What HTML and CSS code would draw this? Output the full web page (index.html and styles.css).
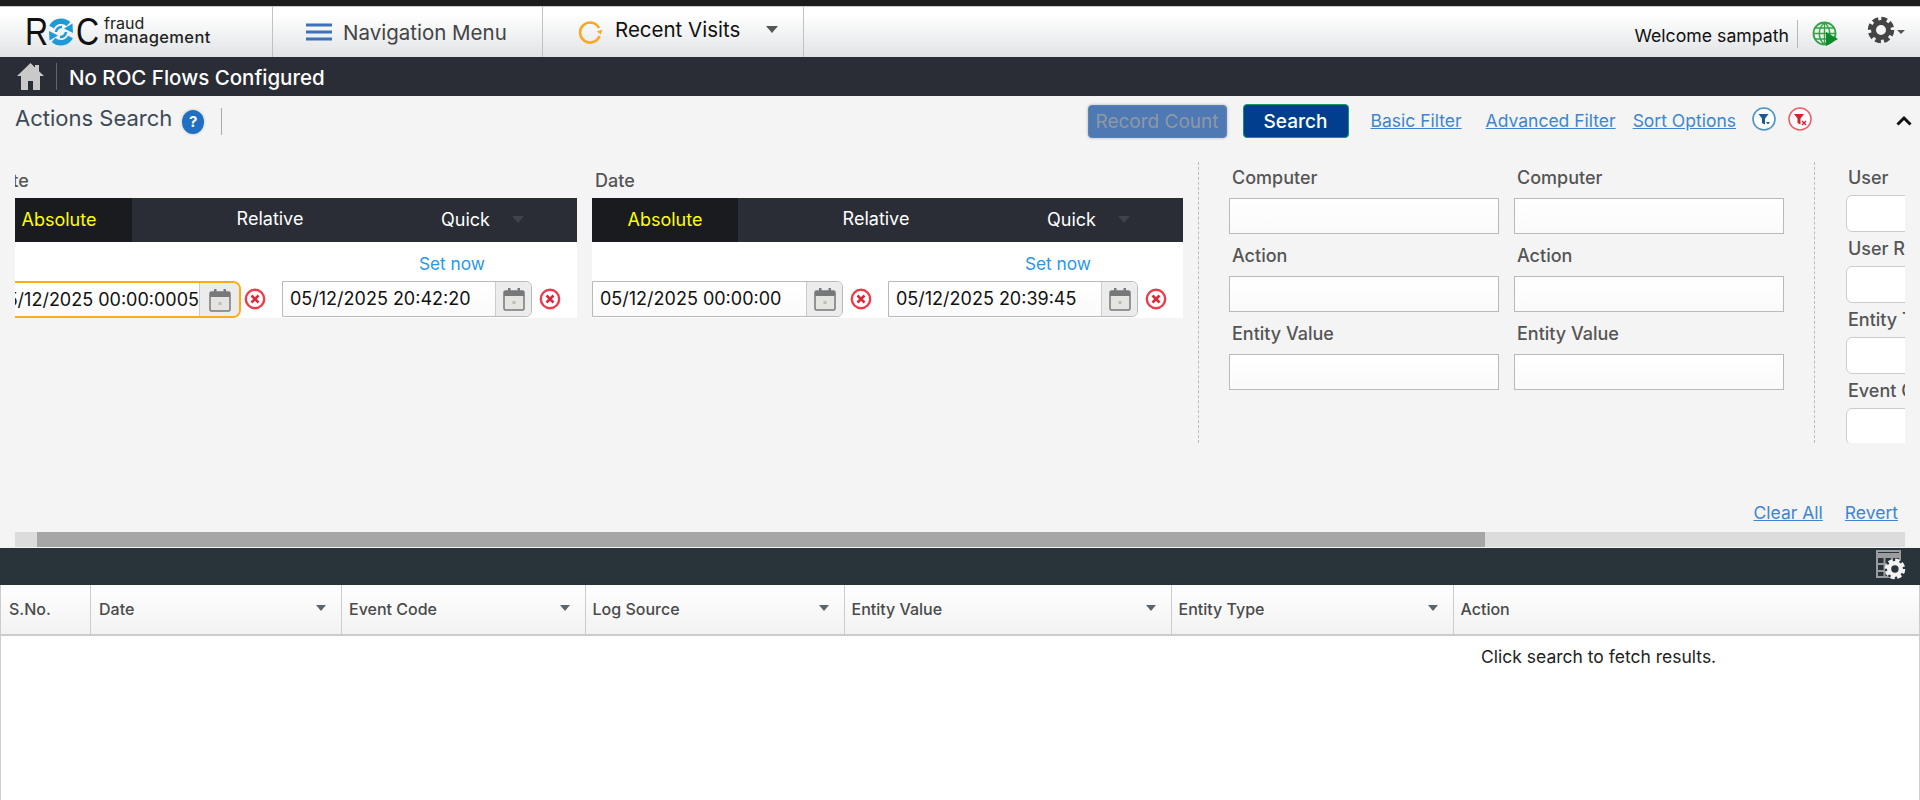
FILE: index.html
```html
<!DOCTYPE html>
<html lang="en">
<head>
<meta charset="utf-8">
<title>Actions Search</title>
<link rel="stylesheet" href="styles.css">
</head>
<body>
<svg class="defs" width="0" height="0" aria-hidden="true">
  <symbol id="cal" viewBox="0 0 22 24">
    <rect x="1" y="4" width="20" height="19" rx="1.5" fill="#e4e4e0" stroke="#77787a" stroke-width="1.5"/>
    <rect x="1" y="4" width="20" height="5" fill="#77787a"/>
    <rect x="5" y="1" width="2.5" height="6" fill="#77787a"/>
    <rect x="14.5" y="1" width="2.5" height="6" fill="#77787a"/>
    <rect x="9.5" y="14" width="3" height="3" fill="#bdbdb8"/>
  </symbol>
  <symbol id="clr" viewBox="0 0 22 22">
    <circle cx="11" cy="11" r="9.2" fill="#fff" stroke="#ec3b4b" stroke-width="2.4"/>
    <path d="M7.5 7.5l7 7M14.5 7.5l-7 7" stroke="#d8283c" stroke-width="2.6"/>
  </symbol>
  <symbol id="gear" viewBox="0 0 28 28">
    <circle cx="14" cy="14" r="7.5" fill="none" stroke="#444" stroke-width="5"/>
    <circle cx="14" cy="14" r="11" fill="none" stroke="#444" stroke-width="4.5" stroke-dasharray="5.6 3.04"/>
  </symbol>
</svg>

<div class="topbar"></div>

<header class="header">
  <div class="logo-cell">
    <div class="logo">
      <span class="logo-roc logo-r">R</span>
      <svg class="logo-o" viewBox="0 0 28 30" aria-hidden="true">
        <path d="M4.500 10A11 11 0 0 1 21.500 7" fill="none" stroke="#1f9ad8" stroke-width="5.500"/>
        <path d="M23.500 20A11 11 0 0 1 6.500 23" fill="none" stroke="#1f9ad8" stroke-width="5.500"/>
        <path d="M17 11.500l8.500-5 .5 9.500zM11 18.500l-8.500 5-.5-9.500z" fill="#1f9ad8"/>
        <path d="M9 15a5.500 5.500 0 0 1 6-5M19 15a5.500 5.500 0 0 1-6 5" fill="none" stroke="#1f9ad8" stroke-width="2.500"/>
      </svg>
      <span class="logo-roc">C</span>
      <span class="logo-sub"><span class="logo-fraud">fraud</span><span class="logo-man">management</span></span>
    </div>
  </div>
  <div class="nav-cell">
    <svg class="burger" viewBox="0 0 26 18" aria-hidden="true"><path d="M0 2h26M0 9h26M0 16h26" stroke="#3d72b8" stroke-width="3"/></svg>
    <span class="nav-label">Navigation Menu</span>
  </div>
  <div class="recent-cell">
    <svg class="recent-icon" viewBox="0 0 26 24" aria-hidden="true">
      <path d="M21 8A10 10 0 1 0 21.500 16" fill="none" stroke="#f9a825" stroke-width="2.600"/>
      <path d="M19 10.500h6l-3 4z" fill="#f9a825" transform="rotate(-15 22 12)"/>
    </svg>
    <span class="recent-label">Recent Visits</span>
    <span class="caret caret-head"></span>
  </div>
  <div class="user-area">
    <span class="welcome">Welcome sampath</span>
    <svg class="globe" viewBox="0 0 26 26" aria-hidden="true">
      <circle cx="12.500" cy="12.500" r="11" fill="#e8f3e8" stroke="#35a24a" stroke-width="1.800"/>
      <path d="M1.500 12.500h22M3 7h19M3 18h19M12.500 1.500v22M12.500 1.500c-7 6-7 16 0 22M12.500 1.500c7 6 7 16 0 22" fill="none" stroke="#35a24a" stroke-width="1.400"/>
      <path d="M14 11l12 7-12 7z" fill="#0d8a2c"/>
    </svg>
    <svg class="gear"><use href="#gear"/></svg>
    <span class="caret caret-gear"></span>
  </div>
</header>

<nav class="crumb">
  <svg class="home" viewBox="0 0 27 27" aria-hidden="true"><path d="M13.500 0L0 13h4v14h7v-9h5v9h7V13h4l-5-4.800V2h-4v2.400z" fill="#c9c9c9"/></svg>
  <span class="crumb-text">No ROC Flows Configured</span>
</nav>

<main class="actions">
  <div class="toolbar">
    <h1 class="title">Actions Search</h1>
    <span class="help">?</span>
    <span class="title-sep"></span>
    <div class="tools">
      <button class="btn btn-count">Record Count</button>
      <button class="btn btn-search">Search</button>
      <a class="link link-basic">Basic Filter</a>
      <a class="link link-adv">Advanced Filter</a>
      <a class="link link-sort">Sort Options</a>
      <svg class="fi fi-first" viewBox="0 0 24 24" aria-hidden="true">
        <circle cx="12" cy="12" r="11" fill="#fff" stroke="#4a94cc" stroke-width="1.600"/>
        <path d="M6.500 7h10l-3.500 4.500v6l-3-1.500v-4.500z" fill="#155a94"/><path d="M14 15h4l-2 2.500z" fill="#155a94"/>
      </svg>
      <svg class="fi" viewBox="0 0 24 24" aria-hidden="true">
        <circle cx="12" cy="12" r="11" fill="#fff" stroke="#f0606c" stroke-width="1.600"/>
        <path d="M6 7h10l-3.500 4.500v6l-3-1.500v-4.500z" fill="#d81f30"/><path d="M14 14l4 4M18 14l-4 4" stroke="#d81f30" stroke-width="1.400"/>
      </svg>
      <svg class="chev" viewBox="0 0 16 11" aria-hidden="true"><path d="M1.500 9.500L8 3l6.500 6.500" fill="none" stroke="#111" stroke-width="3"/></svg>
    </div>
  </div>

  <div class="filters">
    <div class="filters-inner">
      <section class="date-group">
        <div class="f-label">Date</div>
        <div class="tabs">
          <span class="tab tab-on">Absolute</span>
          <span class="tab tab-rel">Relative</span>
          <span class="tab tab-quick">Quick<span class="caret caret-quick"></span></span>
        </div>
        <div class="date-body">
          <a class="set-now">Set now</a>
          <div class="date-row">
            <div class="date-box date-focus"><span class="date-val date-val-end"><span>05/12/2025 00:00:0005</span></span><span class="cal-btn"><svg class="cal"><use href="#cal"/></svg></span></div>
            <svg class="clr"><use href="#clr"/></svg>
            <div class="date-box date-second"><span class="date-val">05/12/2025 20:42:20</span><span class="cal-btn"><svg class="cal"><use href="#cal"/></svg></span></div>
            <svg class="clr"><use href="#clr"/></svg>
          </div>
        </div>
      </section>
      <section class="date-group">
        <div class="f-label">Date</div>
        <div class="tabs">
          <span class="tab tab-on">Absolute</span>
          <span class="tab tab-rel">Relative</span>
          <span class="tab tab-quick">Quick<span class="caret caret-quick"></span></span>
        </div>
        <div class="date-body">
          <a class="set-now">Set now</a>
          <div class="date-row">
            <div class="date-box"><span class="date-val">05/12/2025 00:00:00</span><span class="cal-btn"><svg class="cal"><use href="#cal"/></svg></span></div>
            <svg class="clr"><use href="#clr"/></svg>
            <div class="date-box date-second"><span class="date-val">05/12/2025 20:39:45</span><span class="cal-btn"><svg class="cal"><use href="#cal"/></svg></span></div>
            <svg class="clr"><use href="#clr"/></svg>
          </div>
        </div>
      </section>
      <section class="pair-group">
        <div class="pair"><label class="p-label">Computer</label><input class="p-input"></div>
        <div class="pair"><label class="p-label">Computer</label><input class="p-input"></div>
        <div class="pair"><label class="p-label">Action</label><input class="p-input"></div>
        <div class="pair"><label class="p-label">Action</label><input class="p-input"></div>
        <div class="pair"><label class="p-label">Entity Value</label><input class="p-input"></div>
        <div class="pair"><label class="p-label">Entity Value</label><input class="p-input"></div>
      </section>
      <section class="single-group">
        <div class="single"><label class="s-label">User</label><input class="s-input"></div>
        <div class="single"><label class="s-label">User Role</label><input class="s-input"></div>
        <div class="single"><label class="s-label">Entity Type</label><input class="s-input"></div>
        <div class="single"><label class="s-label">Event Code</label><input class="s-input"></div>
      </section>
    </div>
  </div>

  <div class="foot-links">
    <a class="link">Clear All</a>
    <a class="link">Revert</a>
  </div>
  <div class="hscroll"><div class="hscroll-thumb"></div></div>
</main>

<section class="grid">
  <div class="grid-bar">
    <svg class="grid-cfg" viewBox="0 0 30 30" aria-hidden="true">
      <rect x="1" y="1" width="23" height="26" fill="#2a353b" stroke="#9a9c9e" stroke-width="2"/>
      <path d="M1 3h23v5H1z" fill="#9a9c9e"/>
      <path d="M1 14h23M1 21h23M8.500 8v19M16 8v19" stroke="#9a9c9e" stroke-width="2"/>
      <g transform="translate(8 8) scale(.78)"><circle cx="14" cy="14" r="13" fill="#2a353b"/><circle cx="14" cy="14" r="7.500" fill="none" stroke="#f2f2f2" stroke-width="5.500"/><circle cx="14" cy="14" r="11" fill="none" stroke="#f2f2f2" stroke-width="4.500" stroke-dasharray="5.600 3.040"/></g>
    </svg>
  </div>
  <div class="grid-head">
    <div class="col col-sno">S.No.</div>
    <div class="col col-date">Date<span class="caret caret-col"></span></div>
    <div class="col">Event Code<span class="caret caret-col"></span></div>
    <div class="col">Log Source<span class="caret caret-col"></span></div>
    <div class="col">Entity Value<span class="caret caret-col"></span></div>
    <div class="col">Entity Type<span class="caret caret-col"></span></div>
    <div class="col col-act">Action</div>
  </div>
  <div class="grid-body">Click search to fetch results.</div>
</section>
</body>
</html>
```
FILE: styles.css
```css
* { box-sizing: border-box; }
html, body { margin: 0; padding: 0; height: 100%; overflow: hidden; }
body { width: 1920px; height: 800px; background: #fff; font-family: Inter, "Noto Sans", sans-serif; color: #222; display: flex; flex-direction: column; }
.defs { position: absolute; }
a { cursor: pointer; }

.topbar { height: 7px; background: #1c1c1c; border-bottom: 1px solid #c9c9c9; flex: none; }

.header { height: 50px; flex: none; display: flex; align-items: stretch; background: linear-gradient(#fff 15%, #e1e3e5); }
.logo-cell { width: 273px; border-right: 1px solid #bfc1c3; padding: 9px 0 0 25px; flex: none; }
.logo { display: flex; align-items: flex-start; height: 32px; }
.logo-roc { font-family: "Liberation Sans", sans-serif; font-size: 39px; line-height: 32px; color: #111; width: 24px; flex: none; transform: scaleX(.82); transform-origin: left center; }
.logo-r { width: 22px; }
.logo-o { width: 28px; height: 30px; margin: 1px 1px 0 0; flex: none; }
.logo-sub { display: flex; flex-direction: column; margin-left: 4px; color: #222; }
.logo-fraud { font-size: 16px; line-height: 13px; margin-top: 1px; }
.logo-man { font-size: 16.500px; line-height: 15px; letter-spacing: .35px; font-weight: 500; }

.nav-cell { width: 270px; flex: none; border-right: 1px solid #bfc1c3; display: flex; align-items: center; padding: 0 0 0 33px; }
.burger { width: 26px; height: 18px; flex: none; }
.nav-label { font-size: 20.500px; color: #444; margin-left: 11px; padding-top: 1px; white-space: nowrap; }

.recent-cell { width: 261px; flex: none; border-right: 1px solid #bfc1c3; display: flex; align-items: center; padding-left: 35px; }
.recent-icon { width: 26px; height: 26px; flex: none; }
.recent-label { font-size: 20.500px; color: #111; margin-left: 11px; margin-bottom: 6px; white-space: nowrap; }
.caret { display: inline-block; width: 0; height: 0; border-left: 6px solid transparent; border-right: 6px solid transparent; border-top: 7px solid #555; }
.caret-head { margin-left: 26px; margin-bottom: 6px; }

.user-area { margin-left: auto; display: flex; align-items: center; padding-right: 15px; }
.welcome { font-size: 17.700px; color: #111; padding-right: 8px; height: 28px; line-height: 32px; border-right: 1px solid #b5b7b9; margin-top: 4px; white-space: nowrap; }
.globe { width: 26px; height: 26px; margin: 4px 0 0 14px; flex: none; }
.gear { width: 28px; height: 28px; margin: 0 0 4px 29px; flex: none; }
.caret-gear { border-left-width: 4px; border-right-width: 4px; border-top-width: 4px; margin: 0 0 0 2px; }

.crumb { height: 39px; flex: none; background: #2a2d36; display: flex; align-items: center; padding-left: 17px; }
.home { width: 27px; height: 27px; flex: none; }
.crumb-text { font-size: 20.500px; font-weight: 500; color: #fff; margin-left: 12px; padding-left: 12px; border-left: 1px solid #666; height: 27px; line-height: 29px; white-space: nowrap; }

.actions { height: 452px; flex: none; background: #f4f4f4; display: flex; flex-direction: column; }
.toolbar { height: 66px; flex: none; display: flex; align-items: flex-start; padding: 8px 8px 0 15px; }
.title { margin: 0; font-size: 22px; font-weight: 400; color: #3c4a57; line-height: 28px; }
.help { width: 22px; height: 24px; border-radius: 50%; background: #1f6fc2; color: #fff; font-size: 15px; font-weight: 700; line-height: 24px; text-align: center; margin: 6px 0 0 10px; box-shadow: 0 0 3px #bbb; flex: none; }
.title-sep { width: 1px; height: 27px; background: #aaa; margin: 4px 0 0 17px; flex: none; }
.tools { margin-left: auto; display: flex; align-items: center; height: 34px; }
.btn { height: 34px; border-radius: 4px; font-family: inherit; font-size: 19px; padding: 0; }
.btn-count { width: 139px; border: 1px solid #5c83b8; background: #4f79b3; color: #8f98a6; box-shadow: 0 0 3px #aaa; height: 33px; }
.btn-search { width: 106px; margin-left: 16px; background: #013f8e; color: #fff; border: 1px solid #0d9a6a; font-weight: 500; }
.link { color: #3d85d0; text-decoration: underline; font-size: 17.500px; white-space: nowrap; }
.link-basic { margin-left: 22px; margin-bottom: 2px; }
.link-adv { margin-left: 24px; margin-bottom: 2px; }
.link-sort { margin-left: 17px; margin-bottom: 2px; }
.fi { width: 24px; height: 24px; flex: none; margin-left: 12px; margin-bottom: 5px; }
.fi-first { margin-left: 16px; }
.chev { width: 16px; height: 11px; flex: none; margin: 0 0 2px 84px; }

.filters { margin: 0 15px; height: 281px; flex: none; overflow: hidden; }
.filters-inner { display: flex; align-items: flex-start; margin-left: -29px; width: 2100px; height: 100%; }

.date-group { width: 591px; flex: none; margin-right: 15px; }
.f-label { font-size: 18px; font-weight: 500; color: #555; height: 36px; line-height: 37px; padding-left: 3px; }
.tabs { display: flex; height: 44px; background: #2a2d36; color: #fff; font-size: 18px; }
.tab { display: flex; align-items: center; justify-content: center; padding-bottom: 1px; }
.tab-on { width: 146px; background: #1a1b1f; color: #ff0; }
.tab-rel { width: 276px; padding: 0 0 3px; }
.tab-quick { flex: 1; justify-content: flex-start; padding-left: 33px; }
.caret-quick { margin-left: 22px; border-top-color: #3f424b; }

.date-body { background: #fff; height: 76px; display: flex; flex-direction: column; }
.set-now { align-self: flex-end; margin-right: 92px; font-size: 17.300px; color: #2797ee; height: 39px; line-height: 43px; }
.date-row { display: flex; align-items: flex-start; }
.date-box { width: 251px; height: 36px; border: 1px solid #bababa; display: flex; align-items: stretch; background: linear-gradient(#fff, #fafafa); border-radius: 0 6px 6px 0; flex: none; }
.date-val { width: 213px; flex: none; padding-left: 7px; font-size: 18px; color: #111; line-height: 33px; white-space: nowrap; overflow: hidden; }
.date-val-end { width: 211px; padding: 0; display: flex; justify-content: flex-end; }
.cal-btn { flex: 1; background: #ececec; border-left: 1px solid #ccc; border-radius: 0 6px 6px 0; display: flex; align-items: center; justify-content: center; }
.cal { width: 22px; height: 24px; }
.date-focus { width: 255px; height: 37px; border: 2px solid #fdab17; border-radius: 0 8px 8px 0; margin-right: -4px; }
.clr { width: 22px; height: 22px; margin: 7px 0 0 7px; flex: none; }
.date-second { margin-left: 16px; width: 250px; }
.date-second .date-val { width: 212px; }

.pair-group { width: 616px; height: 100%; flex: none; border-left: 1px dashed #bbb; padding-left: 30px; display: grid; grid-template-columns: 270px 270px; column-gap: 15px; grid-auto-rows: 78px; align-content: start; }
.pair { display: flex; flex-direction: column; }
.p-label { font-size: 18px; font-weight: 500; color: #555; height: 36px; line-height: 32px; padding-left: 3px; }
.p-input { width: 270px; height: 36px; border: 1px solid #bababa; background: linear-gradient(#fff, #fafafa); padding: 0; display: block; border-radius: 0; }
.single-group { height: 100%; flex: none; border-left: 1px dashed #bbb; padding-left: 31px; width: 300px; }
.single { display: flex; flex-direction: column; height: 71px; }
.s-label { font-size: 18px; font-weight: 500; color: #555; height: 33px; line-height: 32px; padding-left: 2px; white-space: nowrap; }
.s-input { width: 120px; height: 37px; border: 1px solid #ccc; border-radius: 6px; background: #fff; padding: 0; display: block; }

.foot-links { flex: none; height: 89px; display: flex; justify-content: flex-end; gap: 22px; padding: 59px 22px 0 0; }
.hscroll { height: 15px; flex: none; margin: 0 15px; background: #dcdcdc; padding-left: 22px; }
.hscroll-thumb { width: 1448px; height: 100%; background: #a6a6a6; }

.grid { flex: 1; display: flex; flex-direction: column; min-height: 0; }
.grid-bar { height: 37px; flex: none; background: #29343a; display: flex; justify-content: flex-end; padding: 2px 14px 0 0; }
.grid-cfg { width: 30px; height: 30px; }
.grid-head { height: 51px; flex: none; display: grid; grid-template-columns: 90px 251px 243.500px 259px 327px 282px 1fr; background: linear-gradient(#fff, #f2f2f2); border-bottom: 2px solid #ccc; border-left: 1px solid #ccc; border-right: 1px solid #ccc; }
.col { display: flex; align-items: center; justify-content: space-between; padding: 0 15px 2px 7px; font-size: 16px; font-weight: 500; color: #4a4a4a; border-right: 1px solid #ccc; }
.col-sno, .col-date { padding-left: 8px; }
.col-act { border-right: 0; }
.caret-col { border-left-width: 5px; border-right-width: 5px; border-top-width: 6px; border-top-color: #5a6570; margin-bottom: 2px; }
.grid-body { flex: 1; border-left: 1px solid #ccc; border-right: 1px solid #ccc; background: #fff; font-size: 17.500px; color: #222; padding: 10px 0 0 1480px; }
```
